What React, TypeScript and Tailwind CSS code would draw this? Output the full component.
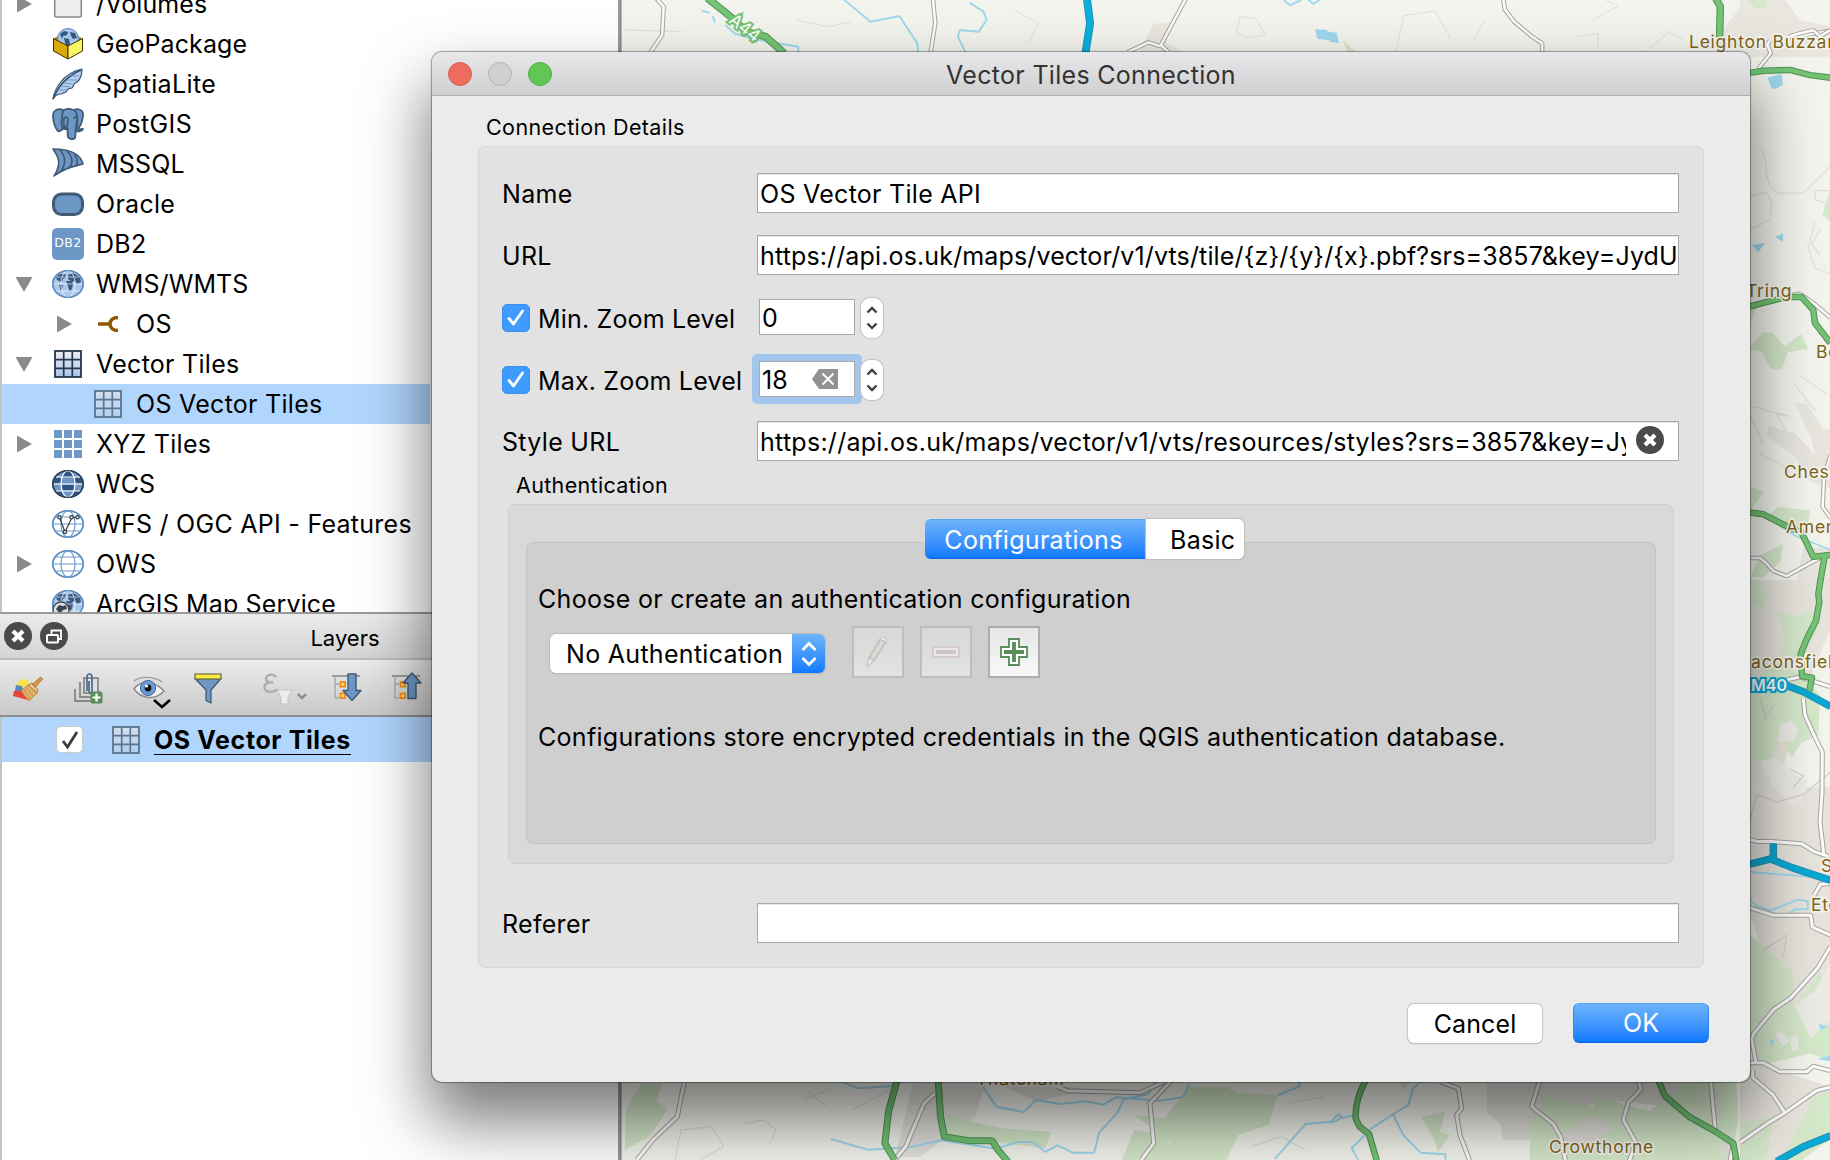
import { type ReactNode } from "react";

const BASE = "whitespace-nowrap text-[25px] leading-[40px]";
const T = "whitespace-nowrap text-[25px] leading-[40px] tracking-[0.3px]";

function Svg({ w = 32, h = 32, children }: { w?: number; h?: number; children: ReactNode }) {
  return (
    <svg width={w} height={h} viewBox={`0 0 ${w} ${h}`} className="shrink-0 overflow-visible" fill="none">
      {children}
    </svg>
  );
}

/* ---------- browser tree icons ---------- */

function FolderIcon() {
  return (
    <Svg>
      <rect x="2.7" y="2" width="26.6" height="27" rx="1.5" fill="#eeeeec" stroke="#888a85" strokeWidth="1.6" />
    </Svg>
  );
}

function GeoPackageIcon() {
  return (
    <Svg>
      <path d="M1.500 10.500L16 3l14.500 7.500L16 19z" fill="#a88a10" />
      <circle cx="16" cy="11" r="10.500" fill="#a9c6e8" stroke="#5b86b8" strokeWidth="1" />
      <path d="M8 6l4-3 4 1-1 3-4 1-1 3zM18 4l5 1 2 5-4 1-2-3zM12 10l5 1 1 5-3 3-2-4z" fill="#33587f" />
      <path d="M1.500 10.500L16 18v13L1.500 23z" fill="#d9a90c" stroke="#3c3000" strokeWidth="1" strokeLinejoin="round" />
      <path d="M30.500 10.500L16 18v13l14.500-8z" fill="#fcf764" stroke="#3c3000" strokeWidth="1" strokeLinejoin="round" />
    </Svg>
  );
}

function SpatiaLiteIcon() {
  return (
    <Svg>
      <path d="M1 31C2 25 4 20 8 15 13 8 20 3 30 1c0 5-1 8-3 11l-2 2-2 1-3 5-4 1-2 3-5 2c-3 0-6 1-8 5z" fill="#b4cdec" stroke="#33536f" strokeWidth="1.200" strokeLinejoin="round" />
      <path d="M1 31C5 21 13 9 29 2" stroke="#2f4f6d" strokeWidth="1.400" />
      <path d="M9 18l9 1M12 15l9 1M15 12l10 0M19 8l8 0M7 22l8 0" stroke="#6f9bc8" strokeWidth="1" />
    </Svg>
  );
}

function PostGISIcon() {
  return (
    <Svg>
      <g fill="#6d97c4" stroke="#415a75" strokeWidth="1.800" strokeLinejoin="round" strokeLinecap="round">
        <path d="M22 2c4-2 9 0 9 4 0 6-2 11-5 15 1 1 3 0 5 0-1 2-5 3-7 2z" />
        <path d="M11 2C6 0 1 2 1 8c0 5 2 12 5 15 2 1 4-1 5-3z" />
        <path d="M12 2c4-2 10-1 12 2 2 4 2 11 0 16-1 3 0 7-1 10-2 2-6 1-7-1-1-4 1-9-3-9-4-1-4-6-3-9 0-4 0-7 2-9z" />
        <path d="M15 20c-3-1-4-5-3-9 1-3 4-2 4 1zM10 20c2 2 4 1 6 1M22 10c2-2 4 0 3 3-1 2-1 4 0 7" />
      </g>
    </Svg>
  );
}

function MSSQLIcon() {
  return (
    <Svg>
      <path d="M1 1c13 0 27 3 30 15-7 2-18 3-29 12 4-6 6-12 4-18C5 7 3 4 1 1z" fill="#6d97c4" stroke="#415a75" strokeWidth="1.600" strokeLinejoin="round" />
      <path d="M8 2c6 7 6 14 1 21M15 3c6 6 6 12 2 17M22 6c4 5 4 9 2 12" stroke="#415a75" strokeWidth="1.600" />
    </Svg>
  );
}

function OracleIcon() {
  return (
    <Svg>
      <rect x="1.500" y="6" width="29" height="20.500" rx="8" fill="#6d97c4" stroke="#415a75" strokeWidth="3" />
    </Svg>
  );
}

function DB2Icon() {
  return (
    <span className="flex h-8 w-8 shrink-0 items-center justify-center rounded-[5px] bg-[#6d97c4] pb-[2px] font-['DejaVu_Sans'] text-[12.500px] tracking-[0.500px] text-white">
      DB2
    </span>
  );
}

type GlobeKind = "wms" | "wcs" | "wfs" | "ows" | "arc";

function GlobeIcon({ kind }: { kind: GlobeKind }) {
  const map = kind === "wms" || kind === "arc";
  const fill = map ? "#a9c8ea" : kind === "wcs" ? "#6d97c4" : "#ffffff";
  const edge = kind === "wcs" ? "#2f4257" : "#5f8fc4";
  const line = map || kind === "wcs" ? "#ffffff" : "#6d9bd0";
  return (
    <Svg>
      <ellipse cx="16" cy="16" rx="15.200" ry="13.300" fill={fill} stroke={edge} strokeWidth="1.500" />
      {kind === "wcs" && (
        <path d="M12 4.500c2-2 6-2 8 0l2 5H10zM3 10h7l-1 5H1.800zM22 10h7l1.200 5H23zM10 17h12l-1 5H11zM4 23h6l3 5c-4 0-7-2-9-5zM28 23h-6l-3 5c4 0 7-2 9-5z" fill="#2f5480" />
      )}
      {map && (
        <path d="M4 9l4-3 5 0 1 3-3 2-1 3-3-1-2-1zM7 16l4 1-1 4-1 3zM16 7l5-2 7 4 1 5-4 2-2-3-3 1-4-3zM14 13l6 0 1 4-2 6-2-1-1-4z" fill="#3a5a82" />
      )}
      <g stroke={line} strokeWidth="1.200" opacity={map ? 0.6 : 1}>
        <ellipse cx="16" cy="16" rx="7" ry="13" />
        <path d="M1.500 16h29M4 9h24M4 23h24" />
      </g>
      <ellipse cx="16" cy="16" rx="15.200" ry="13.300" stroke={edge} strokeWidth="1.300" />
      {kind === "wfs" && (
        <g stroke="#333b44" strokeWidth="1.200" fill="#e8e8e8">
          <path d="M7.500 9.500L13 24 20 9.500h6" fill="none" />
          <circle cx="7.500" cy="9.300" r="1.700" />
          <circle cx="13" cy="24" r="1.700" />
          <circle cx="19.500" cy="9.300" r="1.700" />
          <circle cx="25.500" cy="9.300" r="1.700" />
        </g>
      )}
      {kind === "arc" && (
        <g>
          <circle cx="9" cy="22" r="8" fill="#dfe3e6" stroke="#3b4550" strokeWidth="1.400" />
          <path d="M4 21l3-4 4 1 3-1 1 4-4 1-3 4z" fill="#3b4550" />
        </g>
      )}
    </Svg>
  );
}

function PlugIcon() {
  return (
    <Svg>
      <path d="M6 16h12M26 9.500c-5 0-8 3-8 6.500s3 6.500 8 6.500" stroke="#8f5902" strokeWidth="3.600" />
    </Svg>
  );
}

function GridIcon({ pale = false }: { pale?: boolean }) {
  return (
    <Svg>
      <defs>
        <linearGradient id={pale ? "gp" : "gd"} x1="0" y1="0" x2="0" y2="1">
          <stop offset="0" stopColor={pale ? "#d3dfec" : "#f0eef0"} />
          <stop offset="1" stopColor={pale ? "#b0d0f2" : "#a5c6ea"} />
        </linearGradient>
      </defs>
      <rect x="3" y="3" width="26" height="26" fill={pale ? "url(#gp)" : "url(#gd)"} stroke={pale ? "#5c7590" : "#27364a"} strokeWidth="1.800" />
      <path d="M11.700 3v26M20.300 3v26M3 11.700h26M3 20.300h26" stroke={pale ? "#5c7590" : "#27364a"} strokeWidth="1.700" />
    </Svg>
  );
}

function XYZIcon() {
  return (
    <span className="grid h-8 w-8 shrink-0 grid-cols-3 gap-[2px] p-[2px]">
      {Array.from({ length: 9 }, (_, i) => (
        <span key={i} className="bg-[#6d97c4]" />
      ))}
    </span>
  );
}

function Arrow({ open }: { open: boolean }) {
  return (
    <Svg w={20} h={20}>
      <path d={open ? "M1.500 3h17L10 18z" : "M3 1.500v17L18 10z"} fill="#8b8b8b" />
    </Svg>
  );
}

interface Row {
  label: string;
  icon: ReactNode;
  arrow?: "open" | "closed";
  child?: boolean;
  selected?: boolean;
  track?: string;
}

const rows: Row[] = [
  { label: "/Volumes", icon: <FolderIcon />, arrow: "closed", track: "tracking-[0.1px]" },
  { label: "GeoPackage", icon: <GeoPackageIcon />, track: "tracking-[0.1px]" },
  { label: "SpatiaLite", icon: <SpatiaLiteIcon />, track: "tracking-[0.35px]" },
  { label: "PostGIS", icon: <PostGISIcon />, track: "tracking-[0.35px]" },
  { label: "MSSQL", icon: <MSSQLIcon />, track: "tracking-[0.2px]" },
  { label: "Oracle", icon: <OracleIcon /> },
  { label: "DB2", icon: <DB2Icon /> },
  { label: "WMS/WMTS", icon: <GlobeIcon kind="wms" />, arrow: "open", track: "tracking-[0.1px]" },
  { label: "OS", icon: <PlugIcon />, arrow: "closed", child: true },
  { label: "Vector Tiles", icon: <GridIcon />, arrow: "open" },
  { label: "OS Vector Tiles", icon: <GridIcon pale />, child: true, selected: true },
  { label: "XYZ Tiles", icon: <XYZIcon />, arrow: "closed" },
  { label: "WCS", icon: <GlobeIcon kind="wcs" />, track: "tracking-[0px]" },
  { label: "WFS / OGC API - Features", icon: <GlobeIcon kind="wfs" /> },
  { label: "OWS", icon: <GlobeIcon kind="ows" />, arrow: "closed", track: "tracking-[0.1px]" },
  { label: "ArcGIS Map Service", icon: <GlobeIcon kind="arc" />, track: "tracking-[0.15px]" },
];

function TreeRow({ r }: { r: Row }) {
  return (
    <div className={`flex h-10 w-[428px] shrink-0 items-center ${r.child ? "pl-[52px]" : "pl-3"} ${r.selected ? "bg-[#b1d6fe]" : ""}`}>
      <span className="flex w-[38px] shrink-0">{r.arrow && <Arrow open={r.arrow === "open"} />}</span>
      {r.icon}
      <span className={`ml-[12px] ${BASE} ${r.track ?? "tracking-[0.27px]"}`}>{r.label}</span>
    </div>
  );
}

/* ---------- layers panel ---------- */

function RoundClose() {
  return (
    <Svg w={28} h={28}>
      <circle cx="14" cy="14" r="14" fill="#4a4a4a" />
      <path d="M9 9l10 10M19 9L9 19" stroke="#fff" strokeWidth="4.200" />
    </Svg>
  );
}

function RoundFloat() {
  return (
    <Svg w={28} h={28}>
      <circle cx="14" cy="14" r="14" fill="#4a4a4a" />
      <path d="M11.500 12V8.500h9.500V17h-3" stroke="#fff" strokeWidth="1.800" />
      <rect x="7" y="13" width="11" height="7.500" rx="1" stroke="#fff" strokeWidth="2" />
    </Svg>
  );
}

function Tree({ up = false }: { up?: boolean }) {
  return (
    <Svg>
      <path d="M1 4h28" stroke="#888a85" strokeWidth="1.600" />
      <path d="M4 4v22h4M4 12h4" stroke="#a5a7a3" strokeWidth="1.300" />
      <rect x="9.500" y="10" width="4.600" height="4.600" fill="#fcd9a0" stroke="#f58a0c" strokeWidth="1.800" />
      <rect x="9.500" y="21.500" width="4.600" height="4.600" fill="#fcd9a0" stroke="#f58a0c" strokeWidth="1.800" />
      <path
        d={up ? "M21 1l9 10h-5v15.500h-8V11h-5z" : "M21 28.500l9-10h-5V2h-8v16.500h-5z"}
        fill="#6d97c4"
        stroke="#415a75"
        strokeWidth="1.400"
        strokeLinejoin="round"
      />
    </Svg>
  );
}

function Toolbar() {
  return (
    <div className="flex h-[57px] items-center border-b-2 border-[#8c8c8c] bg-linear-to-b from-[#ececec] to-[#c9c9c9] pl-3">
      <Svg>
        <path d="M9 7l7 1 1 5-8 3-5-3z" fill="#f9e24c" />
        <path d="M4 13l6 1 2 6-9-1z" fill="#5f87b8" />
        <path d="M2 19l8 0 6 9-15-4z" fill="#e8433a" />
        <path d="M9 19l7-6 9 8-8 8z" fill="#e3b06a" stroke="#b98740" strokeWidth="1" strokeLinejoin="round" />
        <path d="M12 18l6 9M14 16l7 8" stroke="#c39348" strokeWidth="1" />
        <path d="M16 13l4-2 6 7-1 3z" fill="#edc58a" stroke="#b07c30" strokeWidth="1" />
        <path d="M20.500 12.500l8-7.500 2 2-7 8z" fill="#d99a45" stroke="#9b6420" strokeWidth="0.800" />
      </Svg>
      <span className="ml-[29px] flex">
        <Svg>
          <path d="M2 17v12h16" stroke="#888a85" strokeWidth="1.800" />
          <path d="M7 10v15h13" stroke="#888a85" strokeWidth="1.800" />
          <rect x="11" y="6" width="14" height="15" fill="#dedede" stroke="#888a85" strokeWidth="1.800" />
          <path d="M14 19V5c0-4 5-4 5 0v14c0 3-3 3-3 0V9" stroke="#4a6a8f" strokeWidth="1.700" />
          <rect x="17.500" y="19.500" width="12" height="12" rx="2" fill="#5a8c5a" />
          <path d="M23.500 21.500v8M19.500 25.500h8" stroke="#fff" strokeWidth="2.200" />
        </Svg>
      </span>
      <span className="ml-[27px] flex">
        <Svg w={40}>
          <path d="M2 9c6-5 20-5 28 1" stroke="#9a9a92" strokeWidth="1.400" />
          <path d="M2 17c6-9 20-9 30 2-8 9-22 9-30-2z" fill="#f2f2f2" stroke="#888a85" strokeWidth="1.400" />
          <circle cx="16" cy="16" r="7.600" fill="#6b9ad6" stroke="#456a99" strokeWidth="1" />
          <circle cx="16" cy="16" r="3.400" fill="#111" />
          <circle cx="14.500" cy="14" r="1.600" fill="#fff" />
          <path d="M22 28l8 7 8-7" stroke="#000" strokeWidth="2.600" />
        </Svg>
      </span>
      <span className="ml-[20px] flex">
        <Svg>
          <path d="M3 6.500h26L19 18v13l-5-2.500V18z" fill="#6d97c4" stroke="#415a75" strokeWidth="1.300" strokeLinejoin="round" />
          <rect x="3" y="2" width="26" height="5" fill="#f9ea45" stroke="#6b6b40" strokeWidth="1.200" />
        </Svg>
      </span>
      <span className="ml-[38px] flex">
        <Svg w={46}>
          <path d="M14.500 5C10 1 4 2.500 4 7c0 3 4 4 7 3.500C6 10 2 12 2.500 16c1 5 9 5 13 1" stroke="#acacac" strokeWidth="2.400" />
          <path d="M15 18h15l-4 7v7h-7v-7z" fill="#eeeeee" stroke="#c3c3c3" strokeWidth="1" />
          <path d="M36 22l4 4 4-4" stroke="#8a8a8a" strokeWidth="2.400" />
        </Svg>
      </span>
      <span className="ml-[23px] flex">
        <Tree />
      </span>
      <span className="ml-[28px] flex">
        <Tree up />
      </span>
    </div>
  );
}

/* ---------- map ---------- */

function Lines({ d, c, w, casing }: { d: string[]; c: string; w: number; casing?: string }) {
  return (
    <g fill="none" strokeLinejoin="round">
      {casing && d.map((p) => <path key={`c${p}`} d={p} stroke={casing} strokeWidth={w + 2} vectorEffect="non-scaling-stroke" />)}
      {d.map((p) => (
        <path key={p} d={p} stroke={c} strokeWidth={w} vectorEffect="non-scaling-stroke" />
      ))}
    </g>
  );
}

function Areas({ d, c }: { d: string[]; c: string }) {
  return (
    <g fill={c}>
      {d.map((p) => (
        <path key={p} d={p} />
      ))}
    </g>
  );
}

const ROAD = "#fdfdfd";
const CASE = "#a9a59f";
const GREEN = "#74c476";
const GCASE = "#549355";
const WATER = "#a0d8ee";
const WOOD = "#d5e8ca";
const URBAN = "#e8e6df";
const FAINT = "#e1e0d8";

function PlaceName({ x, y, children }: { x: number; y: number; children: string }) {
  return (
    <text x={x} y={y} fontSize="17.500" letterSpacing="0.750" fill="#7d651c" stroke="#f6f5ee" strokeWidth="3" paintOrder="stroke">
      {children}
    </text>
  );
}

function MapCanvas() {
  return (
    <svg width="1208" height="1160" viewBox="622 0 1208 1160" className="block font-[Inter]">
      <rect x="622" y="0" width="1208" height="1160" fill="#f3f4ed" />

      {/* northern edge */}
      <g transform="translate(610 0) scale(0.7781 0.3333)">
        <Areas c={URBAN} d={["M1460 0h50l20 60 38 20v90h-148l10-80z", "M698 72l22-4-5 60 25 30h-60z"]} />
        <Areas c={WOOD} d={["M1462 0h26l-4 30-20-6z", "M942 120l18 40h-12z"]} />
        <Lines c={FAINT} w={1} d={["M20 90l70 5M240 60l40 20 30-14M520 30l30 40-12 60M805 100l5-50 20 5 12 50-22 8zM1010 157l10-110 40-14 20 80M1110 120l14-60M1280 0l15 18-30 40M1330 157l30-60 20 20M1240 110l30-10v50"]} />
        <Lines c={WATER} w={2} d={["M300 -2L335 65 372 48 395 130 396 157", "M462 8l18 27 4 25-10 35-24-5-3 20 10 47", "M148 75l12 25 20 15 62 25v20", "M118 32l10 6M132 48l3 20", "M866 0l8 16 14-16M898 0l6 12 8-12"]} />
        <Areas c={WATER} d={["M906 88l16 2v5l12 3 3 32-12-5v-4l-16-4z"]} />
        <Lines c={ROAD} w={2.5} casing={CASE} d={["M60 -4l9 24-2 85-15 52", "M415 -4l3 74-6 87", "M740 -4l-32 139 10 22M665 157l27-30 16 12", "M1148 -4l2 32 12 37 23 45 13 20v27", "M1568 92l-18 8-14 5-30 10-16 10-4 32"]} />
        <Lines c={GREEN} w={5.5} casing={GCASE} d={["M125 -6l30 56 20 45 25 15 24 50", "M1421 -4l6 24-1 92"]} />
        <Lines c="#08b0dc" w={6} casing="#2a91b0" d={["M613 -3l4 73-6 90"]} />
      </g>

      {/* eastern edge, upper */}
      <g transform="translate(1740 0) scale(0.3333 0.37)">
        <Areas c={URBAN} d={["M0 0h110l40 90-60 60-90 10z", "M85 1150l80 20 60 60-10-40-50-100h35l50 70h20v160l-60-20-50-70-80-50z", "M190 1480h80v90h-100z"]} />
        <Areas c={WOOD} d={["M25 0h55l-5 25-30-5z", "M272 510l-25 70 25 20z", "M30 940l38-42h30l35 38 50-33 21 40-61 10-17 45H93l-32-50-31-5z", "M30 820h25l-25 55z", "M30 1315l40 15-40 50zM75 1400l40-30 95 10-10 60-80-20z", "M60 1500l70-30-10 50-50 40h-40z"]} />
        <Lines c={FAINT} w={1.2} d={["M65 398l12 40 2 30 10 32 25 22h76l80-72", "M30 530l50-10 15 25-5 50-60 25", "M270 515h-45v25l35 10M225 600l-20 70 20 55 45 15M240 620l-25 40 25 30", "M180 1015l80 50M165 1040l60 70M20 1095l130 30-40-5 30 50M60 1225l80 40 20-20M30 1120l40 80"]} />
        <Areas c={WATER} d={["M83 210l42-10 4 30-24 10-10 0z", "M35 662l40-5-20 24z", "M105 640l24-8v22z"]} />
        <Lines c={WATER} w={1.5} d={["M100 1410l70 40 100 35"]} />
        <Lines c={ROAD} w={2.5} casing={CASE} d={["M55 186l37-42-10-24 8-10", "M150 98l30-8 40-8 20 16 30-16", "M140 800l40-6 40 25 52 40", "M272 1230l-20 60-4 80 24 30", "M30 1508h30l20 15 20 20 40 14 40-20 40-20 40-18 50-5"]} />
        <Lines c={GREEN} w={4.5} casing={GCASE} d={["M30 197l40-6 80-2 60 14 62 7", "M30 828l60-14 50-11h45l35 35 5 35 46 54", "M30 1385l40 5 65 30 50 20 35 65 52-5M255 1500l-14 70"]} />
      </g>

      {/* eastern edge, lower */}
      <g transform="translate(1740 580) scale(0.3333 0.37)">
        <Areas c="#e7e4dd" d={["M0 0h272v130l-60 130-100 300H0z", "M30 560h242v600H120L30 900z", "M0 1290l130 40 142 40v60l-160 140H0z"]} />
        <Areas c={WOOD} d={["M30 0h20l30 40-10 40-40-20z", "M115 80l50 20 50-20 20 60-50 50-30 60-40-50 20-20z", "M30 290l80-80 70 50 60 50-5 110-50 20-30 40-30-50-40 60-55-10z", "M30 960l130 100 0 100 80-100 30 60v180l-60-20-140 30-70-80z", "M220 1400l52-30v140l-90 60h-60z", "M0 1470l100-20-20 118H0z"]} />
        <Areas c="#edebe6" d={["M120 390l35-10 20 25-15 30-50 5z", "M60 490l50-10 60 50 35 10-20 60-30 10-60-60z", "M165 1150l60-40 47-80v160l-60 50z", "M115 1215l35 30-20 15-22-25zM152 1235l22-5v40l-20 5z"]} />
        <Lines c="#cfcdc4" w={1.2} d={["M30 650l20-70 60 20 80-20 80-60", "M70 1000l70-40-10 60M150 510l40 20-30 30", "M60 320l20 60M100 340l-30 40"]} />
        <Lines c={WATER} w={2} d={["M30 785l10 5 205 15", "M30 865l20 15 40 14 85-30 28 4v22h-40l-18 14"]} />
        <Areas c={WATER} d={["M236 1200l26 5-20 14z", "M230 1295l42-10v15z", "M88 1245l12-5v22z"]} />
        <Lines c={ROAD} w={3} casing={CASE} d={["M130 272l50-10 90 26", "M190 320l5 45 30 60 22 40-1 110-6 80 12 90", "M30 702l25 5h40l90 6 40 22 40 12", "M30 886l70 20 112 0 5 32 55 22", "M272 990l-40 60-40 40-40 40-50 30-60 65-7 15 13 65", "M30 1305h40l50 24h80l20-15 50 12", "M38 1325v20l60 45 37 50", "M0 1520l80-50 55-30 95-60 42-10", "M272 820l-30 2-20 30"]} />
        <Lines c="#08a9d6" w={5.5} casing="#2a91b0" d={["M130 282l60 20 82 40", "M100 712v46M30 768l62-14 66 24 114 34", "M110 1572l80-40 82-30"]} />
        <Lines c={GREEN} w={4.5} casing={GCASE} d={["M242 -2l-7 40 3 22-10 50-28 50-18 40 4 60 30 4-8 36"]} />
      </g>

      {/* southern edge */}
      <g transform="translate(430 1060) scale(0.6122 0.3333)">
        <Areas c="#e3e1dc" d={["M790 60h120l-20 110-90 120h-40z", "M940 80h110v20l-60 25z"]} />
        <Areas c={WOOD} d={["M345 70h35l-10 50 18 30-30 80-40 40 2-120z", "M1240 80h60l20 20 65 5-15 90-50 30-20 80h-100l10-60-60-80 50 10z", "M845 165l40 20 50 20 80 10-10 50-90-20-70-20z", "M1130 300l20-90 50 10 20 80z"]} />
        <Lines c="#d9d8d1" w={1} d={["M400 300l10-90 50-10 20 60-40 40M515 190l30-10 20 30-10 40M690 150l60-60M620 100l30 40M1340 260l50-30 40 40M650 90l-40 30M1400 130l60-20"]} />
        <Lines c={WATER} w={2} d={["M670 65l30 20 50-6 25-15", "M655 237l60 32 70-8 50-20 90 25 35-20h25l20 30 20-20 25 22h35l8-60 30-60 10-40 40-15 20-60", "M900 70l25 70 45 16 20-36 40 12 40-8 30 10 20-22 70 10 40-10 10-40", "M1380 297l50-105 50-8 10-14M1420 65v15l-35 25"]} />
        <Lines c={ROAD} w={3} casing={CASE} d={["M416 60l-12 110-40 70-26 60", "M825 100l-18 30-30 130-18 40", "M1025 80l15 12 120 6 50-42", "M1212 60l-36 70 6 120-20 50"]} />
        <Lines c={GREEN} w={5} casing={GCASE} d={["M763 60l-14 95-6 95 16 50", "M830 60l4 110 6 60 40 12 38 0 10 28 16 35"]} />
      </g>

      {/* south-eastern corner */}
      <g transform="translate(1330 960) scale(0.3333)">
        <Areas c="#e3e1dc" d={["M470 360h600l-60 80-170-20-160 40-60 80h-100l-10-50-40-30z", "M200 360h50l-30 30z"]} />
        <Areas c={WOOD} d={["M275 470l70-15-15 60 30 10-35 50-15-40z", "M600 490l50-90 70 30 70 10 10-32 80 25 80 20 110-90h150l5 120-25 120H600z"]} />
        <Areas c="#e3e1dc" d={["M690 530l80-55 50 0 30 30-60 40-80 5z", "M1095 440l15 5-15 20-10-5z", "M1165 570l30-30 20 20-20 35z"]} />
        <Lines c={WATER} w={2} d={["M0 490l25-28 12 12 38-10M300 365h-30l-20 20-15 50-50 30-60 40-60 60 20 34M190 465l30 60 52 53 74 5v20"]} />
        <Lines c={ROAD} w={3} casing={CASE} d={["M330 365l55 20 10 60-15 20 10 60 30 80", "M630 360l-25 80 65 52 22 38 15 75", "M925 360l8 28-38 40-15 52 38 68-20 55", "M1142 360l14 150", "M1210 550l-10 55"]} />
        <Lines c={GREEN} w={4.5} casing={GCASE} d={["M108 360q-34 60-31 115l12 25 28 22 24 82", "M985 360l20 48 72 62 80 45 53 35 10 55"]} />
      </g>

      <text transform="translate(728 22) rotate(38)" fontSize="17" fill="#fff" stroke="#74c476" strokeWidth="4" paintOrder="stroke">
        A44
      </text>
      <PlaceName x={1689} y={48}>Leighton Buzzard</PlaceName>
      <PlaceName x={1746} y={297}>Tring</PlaceName>
      <PlaceName x={1816} y={358}>Berkhamsted</PlaceName>
      <PlaceName x={1784} y={478}>Chesham</PlaceName>
      <PlaceName x={1786} y={533}>Amersham</PlaceName>
      <PlaceName x={1740} y={668}>eaconsfield</PlaceName>
      <PlaceName x={1821} y={872}>Slough</PlaceName>
      <PlaceName x={1811} y={911}>Eton</PlaceName>
      <PlaceName x={1549} y={1153}>Crowthorne</PlaceName>
      <PlaceName x={976} y={1085}>Thatcham</PlaceName>
      <text x="1751" y="691" fontSize="16" fontWeight="600" fill="#fff" stroke="#08a9d6" strokeWidth="4" paintOrder="stroke">
        M40
      </text>
    </svg>
  );
}

/* ---------- dialog ---------- */

function Field({ children = null }: { children?: ReactNode }) {
  return (
    <div className={`flex h-10 w-[922px] items-center overflow-hidden border border-[#a9a9a9] bg-white pl-[2px] shadow-[inset_0_1px_0_#e6e6e6] ${BASE}`}>{children}</div>
  );
}

function FormRow({ label, children }: { label: string; children: ReactNode }) {
  return (
    <div className="flex h-10 items-center">
      <span className={`w-[255px] shrink-0 pt-[1px] ${T}`}>{label}</span>
      {children}
    </div>
  );
}

function ZoomRow({ label, children, focus }: { label: string; children: ReactNode; focus?: boolean }) {
  return (
    <div className="flex h-10 items-center">
      <span className="mt-[2px] flex h-7 w-7 shrink-0 items-center justify-center rounded-[5px] border border-[#3a8ff5] bg-[#3f9bfd]">
        <svg width="20" height="20" viewBox="0 0 20 20" fill="none">
          <path d="M3 10.500l4.500 5.500L16.500 3" stroke="#fff" strokeWidth="2.800" strokeLinecap="round" strokeLinejoin="round" />
        </svg>
      </span>
      <span className={`ml-[8px] w-[214px] shrink-0 pt-[3px] ${BASE} tracking-[0.17px]`}>{label}</span>
      <span className={`flex rounded-[5px] p-[7px] ${focus ? "bg-[#a2c6ec]" : ""}`}>
        <span className={`flex h-9 w-24 items-center border border-[#a9a9a9] bg-white pl-[2px] pt-[2px] ${BASE}`}>{children}</span>
      </span>
      <span className="relative -ml-[1px] mt-[1px] flex h-[40px] w-[22px] flex-col items-center justify-center gap-[8px] rounded-[9px] bg-white shadow-[0_0_1px_1px_#c2c2c2]">
        <svg width="12" height="8" viewBox="0 0 12 8" fill="none">
          <path d="M1.500 6.500L6 2l4.500 4.500" stroke="#404040" strokeWidth="2.400" />
        </svg>
        <svg width="12" height="8" viewBox="0 0 12 8" fill="none">
          <path d="M1.500 1.500L6 6l4.500-4.500" stroke="#404040" strokeWidth="2.400" />
        </svg>
      </span>
    </div>
  );
}

function Dialog() {
  return (
    <div className="absolute left-[432px] top-[52px] flex h-[1030px] w-[1318px] flex-col overflow-hidden rounded-[10px] bg-[#ebebeb] shadow-[0_0_1px_1px_rgba(0,0,0,0.35),0_36px_64px_4px_rgba(0,0,0,0.52)]">
      <div className="flex h-11 shrink-0 items-center border-b border-[#b0b0b0] bg-linear-to-b from-[#e8e8ea] to-[#d0d0d2] pl-4">
        <span className="h-6 w-6 rounded-full border border-[#dc5b50] bg-[#ed6b5f]" />
        <span className="ml-4 h-6 w-6 rounded-full border border-[#b4b4b4] bg-[#d0d0d0]" />
        <span className="ml-4 h-6 w-6 rounded-full border border-[#4fae41] bg-[#62c654]" />
        <span className={`flex-1 pr-[120px] pt-[2px] text-center text-[#333333] ${T}`}>Vector Tiles Connection</span>
      </div>

      <div className="flex flex-col pl-[46px]">
        <span className="mt-[14px] pl-[8px] text-[21.500px] leading-[34px] tracking-[0.390px] whitespace-nowrap">Connection Details</span>
        <div className="mt-[2px] flex h-[822px] w-[1226px] flex-col rounded-[7px] border border-[#d7d7d7] bg-[#e2e2e2] pl-[23px] pt-[26px]">
          <div className="flex flex-col gap-[22px]">
            <FormRow label="Name">
              <Field>
                <span className="pt-[1px] tracking-[0.27px]">OS Vector Tile API</span>
              </Field>
            </FormRow>
            <FormRow label="URL">
              <Field>
                <span className="pt-[1px] tracking-[0.14px]">https://api.os.uk/maps/vector/v1/vts/tile/{"{z}/{y}/{x}"}.pbf?srs=3857&amp;key=JydU</span>
              </Field>
            </FormRow>
            <ZoomRow label="Min. Zoom Level">0</ZoomRow>
            <ZoomRow label="Max. Zoom Level" focus>
              18
              <svg width="26" height="20" viewBox="0 0 26 20" className="-mt-[2px] ml-[24px]" fill="none">
                <path d="M7 0h19v20H7L0 10z" fill="#929292" />
                <path d="M10.500 4.500l11 11M21.500 4.500l-11 11" stroke="#fff" strokeWidth="2" />
              </svg>
            </ZoomRow>
            <FormRow label="Style URL">
              <Field>
                <span className="w-[866px] shrink-0 overflow-hidden pt-[1px] tracking-[0.27px]">https://api.os.uk/maps/vector/v1/vts/resources/styles?srs=3857&amp;key=Jy</span>
                <span className="-mt-[2px] ml-[10px] flex">
                  <RoundClose />
                </span>
              </Field>
            </FormRow>
          </div>

          <span className="mt-[7px] pl-[14px] text-[21.500px] leading-[34px] tracking-[0.340px] whitespace-nowrap">Authentication</span>
          <div className="ml-[6px] mt-[2px] flex h-[360px] w-[1166px] flex-col items-center rounded-[7px] border border-[#cfcfcf] bg-[#d9d9d9] pt-[37px]">
            <div className="flex h-[302px] w-[1130px] flex-col rounded-[7px] border border-[#c3c3c3] bg-[#cfcfcf]">
              <div className="-mt-6 ml-[398px] flex h-10">
                <span className={`flex w-[221px] items-center justify-center rounded-l-[6px] border-t border-b border-t-[#55a3f8] border-b-[#0a62ee] bg-linear-to-b from-[#6cb3fa] to-[#0a7aff] pr-[4px] pt-[2px] text-white ${T}`}>
                  Configurations
                </span>
                <span className={`flex w-[98px] items-center rounded-r-[6px] bg-white pl-[24px] pt-[2px] shadow-[0_0_1px_1px_#c0c0c0,0_1px_1px_#a8a8a8] ${T}`}>Basic</span>
              </div>
              <span className={`mt-[20px] pl-[11px] ${T}`}>Choose or create an authentication configuration</span>
              <div className="mt-[7px] flex h-[52px] items-center pl-[23px]">
                <span className="mt-[3px] flex h-[39px] w-[275px] overflow-hidden rounded-[6px] bg-white shadow-[0_0_1px_1px_#bdbdbd,0_1px_1px_#a0a0a0]">
                  <span className={`w-[242px] pl-[16px] ${T}`}>No Authentication</span>
                  <span className="flex w-[33px] items-center justify-center bg-linear-to-b from-[#6cb3fa] to-[#0a7aff]">
                    <svg width="18" height="26" viewBox="0 0 18 26" fill="none">
                      <path d="M2.500 9L9 2.500 15.500 9M2.500 17L9 23.500l6.500-6.500" stroke="#fff" strokeWidth="2.800" />
                    </svg>
                  </span>
                </span>
                <span className="ml-[27px] flex h-[52px] w-[52px] items-center justify-center border-2 border-[#bebebe] bg-linear-to-b from-[#d8d8d8] to-[#e2e2e2]">
                  <Svg>
                    <path d="M18 3l6 3L12 25l-7 6 2-10z" fill="#cfcfc8" stroke="#b8b8b2" strokeWidth="1" />
                    <path d="M18 3l1.500-2.500 6 3L24 6zM6.500 22l5 3-6.500 6z" fill="#ececea" stroke="#b9b9b5" strokeWidth="0.800" />
                    <path d="M20.500 6L10 22" stroke="#dfdfd9" strokeWidth="2" />
                  </Svg>
                </span>
                <span className="ml-4 flex h-[52px] w-[52px] items-center justify-center border-2 border-[#bebebe] bg-linear-to-b from-[#d8d8d8] to-[#e2e2e2]">
                  <span className="flex h-3 w-7 items-center justify-center border-2 border-[#d6cbcb] bg-[#e8e8e8]">
                    <span className="h-1 w-5 bg-[#d0c5c5]" />
                  </span>
                </span>
                <span className="ml-4 flex h-[52px] w-[52px] items-center justify-center border-2 border-[#adadad] bg-linear-to-b from-[#e6e6e6] to-[#f8f8f8]">
                  <Svg>
                    <path d="M11 3h10v8h8v10h-8v8H11v-8H3V11h8z" fill="#fff" stroke="#5a8c5a" strokeWidth="1.800" />
                    <path d="M16 6v20M6 16h20" stroke="#5a8c5a" strokeWidth="3.800" />
                  </Svg>
                </span>
              </div>
              <span className={`mt-[39px] pl-[11px] ${T}`}>Configurations store encrypted credentials in the QGIS authentication database.</span>
            </div>
          </div>

          <div className="mt-[39px]">
            <FormRow label="Referer">
              <Field />
            </FormRow>
          </div>
        </div>

        <div className="mt-[35px] flex gap-[31px] pl-[930px]">
          <button className="mt-[1px] h-[39px] w-[134px] rounded-[6px] bg-white text-[25px] leading-[38px] tracking-[0.1px] shadow-[0_0_1px_1px_#c4c4c4,0_1px_1px_#a0a0a0]">Cancel</button>
          <button className="h-10 w-[136px] rounded-[6px] border border-x-[#2f85f5] border-t-[#55a3f8] border-b-[#0a62ee] bg-linear-to-b from-[#6cb3fa] to-[#0a7aff] text-[25px] leading-[37px] text-white">
            OK
          </button>
        </div>
      </div>
    </div>
  );
}

export default function App() {
  return (
    <div className="relative flex h-[1160px] w-[1830px] overflow-hidden bg-white font-[Inter,sans-serif] text-black">
      <div className="flex w-[618px] shrink-0 flex-col">
        <div className="flex h-[612px] flex-col overflow-hidden border-l-2 border-[#c4c4c4] bg-white">
          <div className="-mt-4 flex flex-col">
            {rows.map((r) => (
              <TreeRow key={r.label} r={r} />
            ))}
          </div>
        </div>
        <div className="flex h-[48px] items-center border-t-2 border-b-2 border-t-[#999] border-b-[#bdbdbd] bg-linear-to-b from-[#ebebeb] to-[#d4d4d4] pl-1">
          <RoundClose />
          <span className="ml-2 flex">
            <RoundFloat />
          </span>
          <span className="flex-1 pl-[4px] pt-[3px] text-center text-[22px] leading-[40px]">Layers</span>
        </div>
        <Toolbar />
        <div className="flex-1 border-l-2 border-[#c4c4c4] bg-white">
          <div className="flex h-[45px] items-center bg-[#b1d6fe] pl-[54px]">
            <span className="flex h-[27px] w-[27px] items-center justify-center rounded-[5px] border border-[#c9c9c9] bg-white">
              <svg width="18" height="20" viewBox="0 0 18 20" fill="none">
                <path d="M2 11l4.500 6L16 2" stroke="#3c3c3c" strokeWidth="2.800" />
              </svg>
            </span>
            <span className="ml-[27px] flex">
              <GridIcon pale />
            </span>
            <span className="ml-[12px] mt-[1px] h-[30px] border-b border-black text-[25px] font-bold leading-[30px] tracking-[0.600px]">OS Vector Tiles</span>
          </div>
        </div>
      </div>
      <div className="w-1 shrink-0 border-l-2 border-r border-l-[#9a9a9a] border-r-[#b8b8b8] bg-[#8a8a8a]" />
      <MapCanvas />
      <Dialog />
    </div>
  );
}
